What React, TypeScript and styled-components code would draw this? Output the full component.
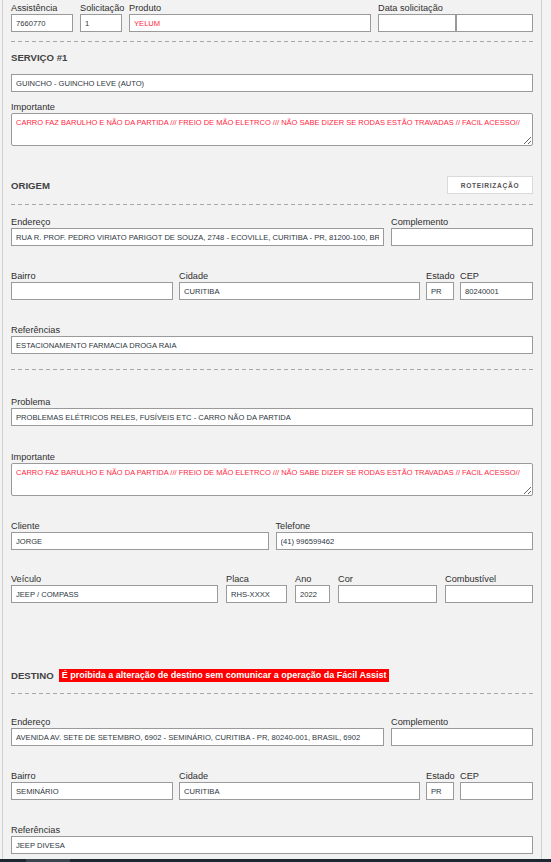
import React from "react"
import styled, { createGlobalStyle } from "styled-components"

const GlobalStyle = createGlobalStyle`
  html, body {
    margin: 0;
    padding: 0;
    background: #f3f3f3;
  }
  * {
    box-sizing: border-box;
  }
`

const Page = styled.div`
  display: flex;
  flex-direction: column;
  height: 862px;
  width: 551px;
  overflow: hidden;
`

const Panel = styled.main`
  flex: 1;
  margin-left: 2px;
  width: 540px;
  padding: 3px 8px 0;
  background: #f2f2f2;
  border-left: 1px solid #cfcfcf;
  border-right: 1px solid #cfcfcf;
  font-family: "Liberation Sans", Arial, sans-serif;
  overflow: hidden;
`

const Row = styled.div<{ $mt?: number; $gap?: number }>`
  display: flex;
  align-items: flex-end;
  gap: ${(p) => p.$gap ?? 7}px;
  margin-top: ${(p) => p.$mt ?? 0}px;
`

const Field = styled.div<{ $w?: number }>`
  display: flex;
  flex-direction: column;
  ${(p) => (p.$w ? `width: ${p.$w}px; flex: none;` : "flex: 1; min-width: 0;")}
`

const Label = styled.label`
  display: block;
  height: 11px;
  line-height: 10px;
  font-size: 9.2px;
  color: #2f2f2f;
  white-space: nowrap;
`

const Input = styled.input<{ $red?: boolean }>`
  display: block;
  width: 100%;
  height: 18px;
  margin: 0;
  padding: 0 4px;
  background: #fff;
  border: 1px solid #9a9a9a;
  border-radius: 0;
  outline: none;
  font-family: "Liberation Sans", Arial, sans-serif;
  font-size: 7.6px;
  text-transform: uppercase;
  color: ${(p) => (p.$red ? "#ff1f43" : "#2c3640")};
`

const Area = styled.textarea`
  display: block;
  width: 100%;
  height: 33px;
  margin: 0;
  padding: 4px 4px 0;
  background: #fff;
  border: 1px solid #9a9a9a;
  border-radius: 2px;
  outline: none;
  font-family: "Liberation Sans", Arial, sans-serif;
  font-size: 7.5px;
  line-height: 10px;
  color: #ff1f43;
`

const DateGroup = styled.div`
  display: flex;
  width: 155px;
  flex: none;
`

const Dashed = styled.hr<{ $mt: number }>`
  height: 1px;
  margin: ${(p) => p.$mt}px 0 0;
  border: none;
  background: repeating-linear-gradient(to right, #a8a8a8 0 4px, transparent 4px 7px);
`

const SectionHead = styled.div<{ $mt: number; $h?: number }>`
  display: flex;
  align-items: center;
  justify-content: space-between;
  height: ${(p) => p.$h ?? 12}px;
  margin-top: ${(p) => p.$mt}px;
`

const Title = styled.h2`
  display: flex;
  align-items: center;
  gap: 5px;
  margin: 0;
  font-size: 9.6px;
  font-weight: 700;
  color: #424242;
`

const Warning = styled.span`
  display: inline-block;
  padding: 0 3px;
  line-height: 13px;
  background: #ff0000;
  color: #fff;
  font-size: 9px;
  font-weight: 700;
`

const RouteButton = styled.button`
  width: 86px;
  height: 18px;
  padding: 0;
  background: #fff;
  border: 1px solid #dadada;
  font-family: "Liberation Sans", Arial, sans-serif;
  font-size: 6.6px;
  font-weight: 700;
  letter-spacing: 0.7px;
  color: #555;
  cursor: pointer;
`

const Taskbar = styled.footer`
  display: flex;
  height: 3px;
  flex: none;
  background: #1d2832;
  padding-left: 26px;
`

const TaskItem = styled.div`
  width: 44px;
  height: 3px;
  background: #3b4650;
`

const importante =
  "CARRO FAZ BARULHO E NÃO DA PARTIDA /// FREIO DE MÃO ELETRCO /// NÃO SABE DIZER SE RODAS ESTÃO TRAVADAS // FACIL ACESSO//"

type AddressProps = {
  mt: number
  endereco: string
  bairro: string
  cidade: string
  estado: string
  cep: string
}

function AddressRows({ mt, endereco, bairro, cidade, estado, cep }: AddressProps) {
  return (
    <>
      <Row $mt={mt}>
        <Field>
          <Label>Endereço</Label>
          <Input readOnly value={endereco} />
        </Field>
        <Field $w={142}>
          <Label>Complemento</Label>
          <Input readOnly value="" />
        </Field>
      </Row>
      <Row $mt={25} $gap={6}>
        <Field $w={162}>
          <Label>Bairro</Label>
          <Input readOnly value={bairro} />
        </Field>
        <Field>
          <Label>Cidade</Label>
          <Input readOnly value={cidade} />
        </Field>
        <Field $w={28}>
          <Label>Estado</Label>
          <Input readOnly value={estado} />
        </Field>
        <Field $w={73}>
          <Label>CEP</Label>
          <Input readOnly value={cep} />
        </Field>
      </Row>
    </>
  )
}

export default function App() {
  return (
    <>
      <GlobalStyle />
      <Page>
        <Panel>
          <Row>
            <Field $w={62}>
              <Label>Assistência</Label>
              <Input readOnly value="7660770" />
            </Field>
            <Field $w={42}>
              <Label>Solicitação</Label>
              <Input readOnly value="1" />
            </Field>
            <Field>
              <Label>Produto</Label>
              <Input readOnly $red value="YELUM" />
            </Field>
            <Field $w={155}>
              <Label>Data solicitação</Label>
              <DateGroup>
                <Input readOnly value="" />
                <Input readOnly value="" />
              </DateGroup>
            </Field>
          </Row>

          <Dashed $mt={9} />
          <SectionHead $mt={9}>
            <Title>SERVIÇO #1</Title>
          </SectionHead>
          <Row $mt={11}>
            <Field>
              <Input readOnly value="GUINCHO - GUINCHO LEVE (AUTO)" />
            </Field>
          </Row>
          <Row $mt={10}>
            <Field>
              <Label>Importante</Label>
              <Area readOnly value={importante} />
            </Field>
          </Row>

          <SectionHead $mt={30} $h={18}>
            <Title>ORIGEM</Title>
            <RouteButton>ROTEIRIZAÇÃO</RouteButton>
          </SectionHead>
          <Dashed $mt={10} />
          <AddressRows
            mt={12}
            endereco="RUA R. PROF. PEDRO VIRIATO PARIGOT DE SOUZA, 2748 - ECOVILLE, CURITIBA - PR, 81200-100, BRASIL"
            bairro=""
            cidade="CURITIBA"
            estado="PR"
            cep="80240001"
          />
          <Row $mt={25}>
            <Field>
              <Label>Referências</Label>
              <Input readOnly value="ESTACIONAMENTO FARMACIA DROGA RAIA" />
            </Field>
          </Row>

          <Dashed $mt={15} />
          <Row $mt={27}>
            <Field>
              <Label>Problema</Label>
              <Input readOnly value="PROBLEMAS ELÉTRICOS RELES, FUSÍVEIS ETC - CARRO NÃO DA PARTIDA" />
            </Field>
          </Row>
          <Row $mt={26}>
            <Field>
              <Label>Importante</Label>
              <Area readOnly value={importante} />
            </Field>
          </Row>
          <Row $mt={25}>
            <Field>
              <Label>Cliente</Label>
              <Input readOnly value="JORGE" />
            </Field>
            <Field>
              <Label>Telefone</Label>
              <Input readOnly value="(41) 996599462" />
            </Field>
          </Row>
          <Row $mt={24} $gap={8}>
            <Field>
              <Label>Veículo</Label>
              <Input readOnly value="JEEP / COMPASS" />
            </Field>
            <Field $w={61}>
              <Label>Placa</Label>
              <Input readOnly value="RHS-XXXX" />
            </Field>
            <Field $w={35}>
              <Label>Ano</Label>
              <Input readOnly value="2022" />
            </Field>
            <Field $w={99}>
              <Label>Cor</Label>
              <Input readOnly value="" />
            </Field>
            <Field $w={88}>
              <Label>Combustível</Label>
              <Input readOnly value="" />
            </Field>
          </Row>

          <SectionHead $mt={66} $h={13}>
            <Title>
              DESTINO
              <Warning>É proibida a alteração de destino sem comunicar a operação da Fácil Assist</Warning>
            </Title>
          </SectionHead>
          <Dashed $mt={11} />
          <AddressRows
            mt={23}
            endereco="AVENIDA AV. SETE DE SETEMBRO, 6902 - SEMINÁRIO, CURITIBA - PR, 80240-001, BRASIL, 6902"
            bairro="SEMINÁRIO"
            cidade="CURITIBA"
            estado="PR"
            cep=""
          />
          <Row $mt={25}>
            <Field>
              <Label>Referências</Label>
              <Input readOnly value="JEEP DIVESA" />
            </Field>
          </Row>
        </Panel>
        <Taskbar>
          <TaskItem />
        </Taskbar>
      </Page>
    </>
  )
}
